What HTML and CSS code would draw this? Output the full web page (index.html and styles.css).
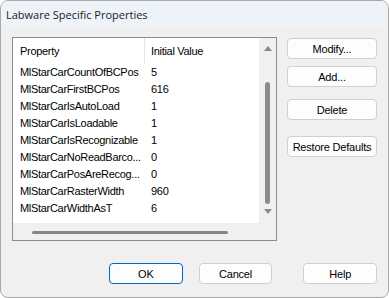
FILE: index.html
```html
<!DOCTYPE html>
<html lang="en">
<head>
    <meta charset="UTF-8">
    <meta name="viewport" content="width=device-width, initial-scale=1.0">
    <title>Labware Specific Properties</title>
    <link rel="stylesheet" href="styles.css">
</head>
<body>
    <div class="window">
        <div class="titlebar">Labware Specific Properties</div>
        <div class="content">
            <div class="main">
                <div class="listbox">
                    <div class="list-area">
                        <div class="list-header">
                            <div class="col-prop">Property</div>
                            <div class="col-val">Initial Value</div>
                        </div>
                        <div class="row"><div class="col-prop">MlStarCarCountOfBCPos</div><div class="col-val">5</div></div>
                        <div class="row"><div class="col-prop">MlStarCarFirstBCPos</div><div class="col-val">616</div></div>
                        <div class="row"><div class="col-prop">MlStarCarIsAutoLoad</div><div class="col-val">1</div></div>
                        <div class="row"><div class="col-prop">MlStarCarIsLoadable</div><div class="col-val">1</div></div>
                        <div class="row"><div class="col-prop">MlStarCarIsRecognizable</div><div class="col-val">1</div></div>
                        <div class="row"><div class="col-prop">MlStarCarNoReadBarco...</div><div class="col-val">0</div></div>
                        <div class="row"><div class="col-prop">MlStarCarPosAreRecog...</div><div class="col-val">0</div></div>
                        <div class="row"><div class="col-prop">MlStarCarRasterWidth</div><div class="col-val">960</div></div>
                        <div class="row"><div class="col-prop">MlStarCarWidthAsT</div><div class="col-val">6</div></div>
                    </div>
                    <div class="vscroll">
                        <div class="arrow-up"></div>
                        <div class="vthumb"></div>
                        <div class="arrow-down"></div>
                    </div>
                    <div class="hscroll">
                        <div class="hthumb"></div>
                    </div>
                </div>
                <div class="side-buttons">
                    <button class="btn">Modify...</button>
                    <button class="btn">Add...</button>
                    <button class="btn delete">Delete</button>
                    <button class="btn restore">Restore Defaults</button>
                </div>
            </div>
            <div class="footer">
                <button class="btn btn-wide btn-default">OK</button>
                <button class="btn btn-wide">Cancel</button>
                <button class="btn btn-wide help">Help</button>
            </div>
        </div>
    </div>
</body>
</html>
```

FILE: styles.css
```css
body {
    margin: 0;
    background-color: white;
    font-family: "Liberation Sans", Arial, sans-serif;
    font-size: 11px;
    color: black;
}

.window {
    box-sizing: border-box;
    width: 389px;
    height: 298px;
    border: 1px solid #a9a9a9;
    border-radius: 8px;
    background: #f0f0f0;
    overflow: hidden;
    display: flex;
    flex-direction: column;
}

.titlebar {
    height: 26px;
    line-height: 27px;
    padding-left: 5px;
    background: #eef3fa;
    font-family: "Open Sans", "Noto Sans", sans-serif;
    font-size: 11px;
    color: #1a1a1a;
}

.content {
    flex: 1;
    padding: 10px 11px 0 11px;
}

.main {
    display: flex;
    justify-content: space-between;
}

.listbox {
    width: 265px;
    height: 204px;
    box-sizing: border-box;
    border: 1px solid #8c8c8c;
    display: grid;
    grid-template-columns: 246px 17px;
    grid-template-rows: 185px 17px;
}

.list-area {
    background: white;
    letter-spacing: -0.3px;
}

.list-header {
    display: flex;
    height: 26px;
    line-height: 27px;
}

.list-header .col-prop {
    border-right: 1px solid #e5e5e5;
}

.row {
    display: flex;
    height: 17px;
    line-height: 17px;
}

.col-prop {
    box-sizing: border-box;
    width: 132px;
    padding-left: 7px;
    white-space: nowrap;
}

.col-val {
    padding-left: 6px;
}

.vscroll {
    grid-row: 1 / 3;
    grid-column: 2;
    background: #f0f0f0;
    display: flex;
    flex-direction: column;
    align-items: center;
    padding-top: 8px;
    box-sizing: border-box;
}

.arrow-up {
    width: 0;
    height: 0;
    border-left: 4px solid transparent;
    border-right: 4px solid transparent;
    border-bottom: 5px solid #8a8a8a;
}

.vthumb {
    width: 5px;
    height: 122px;
    margin-top: 31px;
    border-radius: 3px;
    background: #8a8a8a;
}

.arrow-down {
    width: 0;
    height: 0;
    margin-top: 5px;
    border-left: 4px solid transparent;
    border-right: 4px solid transparent;
    border-top: 5px solid #8a8a8a;
}

.hscroll {
    grid-row: 2;
    grid-column: 1;
    background: #f0f0f0;
    padding-top: 8px;
    padding-left: 19px;
    box-sizing: border-box;
}

.hthumb {
    width: 196px;
    height: 3px;
    border-radius: 2px;
    background: #858585;
}

.side-buttons {
    display: flex;
    flex-direction: column;
    gap: 7px;
    padding-top: 1px;
}

.btn {
    box-sizing: border-box;
    width: 90px;
    height: 21px;
    padding: 0;
    background: #fdfdfd;
    border: 1px solid #d0d0d0;
    border-radius: 4px;
    font-family: "Liberation Sans", Arial, sans-serif;
    font-size: 11px;
    letter-spacing: -0.2px;
    color: black;
}

.delete {
    margin-top: 5px;
}

.restore {
    margin-top: 9px;
}

.footer {
    display: flex;
    padding-top: 22px;
    padding-left: 97px;
}

.btn-wide {
    width: 74px;
}

.btn-default {
    border-color: #0067c0;
}

.btn-wide + .btn-wide {
    margin-left: 16px;
}

.btn-wide.help {
    margin-left: 31px;
}
```
